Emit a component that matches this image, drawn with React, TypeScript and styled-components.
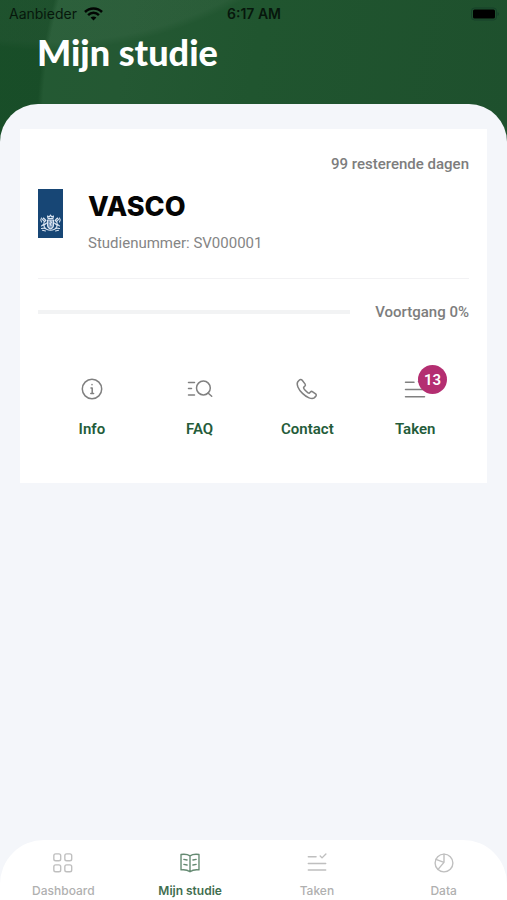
import React from 'react';
import styled, { createGlobalStyle } from 'styled-components';

const GlobalStyle = createGlobalStyle`
  * { box-sizing: border-box; }
  body { margin: 0; background: #f4f6fa; font-family: Roboto, "Liberation Sans", sans-serif; }
`;

const Page = styled.div`
  display: flex;
  flex-direction: column;
  min-height: 100vh;
`;

const Header = styled.header`
  height: 144px;
  overflow: hidden;
  background:
    radial-gradient(circle 500px at 537px 130px, transparent 99%, rgba(0, 50, 15, 0.3) 100%),
    radial-gradient(circle 400px at 50px -350px, rgba(255, 255, 255, 0.04) 98%, transparent 100%),
    linear-gradient(100deg, #235a33 0%, #245833 25%, #20552f 50%, #1e502d 100%);
`;

const StatusBar = styled.div`
  display: grid;
  grid-template-columns: 1fr auto 1fr;
  align-items: center;
  height: 27px;
  padding: 0 8px 0 9px;
  color: #07170c;
  font: 400 14px Inter, sans-serif;
`;

const Carrier = styled.span`
  display: flex;
  align-items: center;
  gap: 7px;
`;

const Clock = styled.span`
  font-weight: 600;
`;

const BatteryIcon = styled.svg`
  justify-self: end;
`;

const Title = styled.h1`
  margin: 0;
  padding-left: 37px;
  color: #fff;
  font: 900 36px/50px Lato, sans-serif;
`;

const Sheet = styled.main`
  flex: 1;
  margin-top: -40px;
  padding: 25px 20px;
  border-radius: 38px 38px 0 0;
  background: #f4f6fa;
`;

const Card = styled.section`
  padding: 25px 18px 44px;
  background: #fff;
`;

const Note = styled.p`
  margin: 0;
  color: #7d7d7d;
  font-size: 15px;
  line-height: 20px;
  font-weight: 500;
  text-align: right;
  white-space: nowrap;
`;

const Study = styled.div`
  display: flex;
  gap: 25px;
  padding: 15px 0 25px;
  border-bottom: 1px solid #f2f2f4;
`;

const StudyName = styled.h2`
  margin: 0 0 9px;
  color: #050505;
  font: 800 27px/35px Inter, sans-serif;
`;

const StudyNumber = styled.p`
  margin: 0;
  color: #858585;
  font-size: 15px;
  line-height: 20px;
`;

const ProgressRow = styled.div`
  display: flex;
  align-items: center;
  gap: 25px;
  padding-top: 23px;
`;

const Progress = styled.progress`
  flex: 1;
  min-width: 0;
  height: 4px;
  appearance: none;
  border: 0;
  background: #f2f3f4;
  &::-webkit-progress-bar { background: #f2f3f4; }
  &::-webkit-progress-value { background: #23582f; }
`;

const Actions = styled.div`
  display: grid;
  grid-template-columns: repeat(4, 1fr);
  margin-top: 55px;
`;

const Action = styled.button`
  display: flex;
  flex-direction: column;
  align-items: center;
  gap: 18px;
  padding: 0;
  border: 0;
  background: none;
  color: #245c3a;
  font: 600 15px/20px Roboto, sans-serif;
`;

const IconBox = styled.span`
  position: relative;
  display: flex;
  color: #808080;
`;

const Badge = styled.span`
  position: absolute;
  left: 15px;
  top: -12px;
  width: 29px;
  height: 29px;
  border-radius: 50%;
  background: #b42e71;
  color: #fff;
  font: 600 15px/30px Roboto, sans-serif;
  text-align: center;
`;

const TabBar = styled.nav`
  display: grid;
  grid-template-columns: repeat(4, 1fr);
  height: 60px;
  padding-top: 12px;
  border-radius: 44px 44px 0 0;
  background: #fff;
`;

const Tab = styled.a<{ $active?: boolean }>`
  display: flex;
  flex-direction: column;
  align-items: center;
  gap: 9px;
  color: ${({ $active }) => ($active ? '#3f6e50' : '#b0b0b0')};
  font: ${({ $active }) => ($active ? 600 : 500)} 12px/16px Inter, sans-serif;
  text-decoration: none;
  svg { opacity: 0.8; }
`;

const Line = styled.svg.attrs({ viewBox: '0 0 24 24', fill: 'none', stroke: 'currentColor', 'aria-hidden': true })`
  height: 24px;
  width: 24px;
  overflow: visible;
  stroke-width: 1.5;
  stroke-linecap: round;
  stroke-linejoin: round;
`;

const TabLine = styled(Line)`
  height: 22px;
  width: 22px;
`;

const Wifi = () => (
  <svg width="19" height="14" viewBox="0 0 19 14" fill="none" stroke="#020503" strokeWidth="2.5" aria-hidden="true">
    <path d="M1 5C5.7.3 13.3.3 18 5M4.1 8.1c3-3 7.8-3 10.8 0" />
    <path d="M9.5 13.5 6.6 10.6c1.7-1.5 4.1-1.5 5.8 0z" fill="#020503" stroke="none" />
  </svg>
);

const Battery = () => (
  <BatteryIcon width="28" height="14" viewBox="0 0 28 14" aria-hidden="true">
    <rect x=".5" y="1" width="25" height="12" rx="3" fill="none" stroke="#16412a" />
    <rect x="2" y="2.5" width="22" height="9" rx="1.5" fill="#000" />
    <path d="M26.5 5v4q1.5-.7 1.5-2t-1.5-2" fill="#16412a" />
  </BatteryIcon>
);

const Ribbon = () => (
  <svg width="25" height="49" viewBox="0 0 25 49" role="img" aria-label="Rijksoverheid">
    <path fill="#174675" d="M0 0h25v49H0z" />
    <g fill="none" stroke="#dce6f2" strokeWidth="1.1" strokeLinecap="round" strokeLinejoin="round">
      <path d="M9.5 31h6v5q0 3-3 4-3-1-3-4z" fill="#7895b7" />
      <path d="M10 29.5 9.5 27l1.7 1 1.3-2 1.3 2 1.7-1-.5 2.5zM12.5 26v1" />
      <path d="m7.5 31-2-2-1 1.7 1.8 1.5-.5 3L3.5 37M8.5 34 5.7 36.5 7 39M3.5 33q-1.5-2 0-4M6 33l2-1.5M17.5 31l2-2 1 1.7-1.8 1.5.5 3 2.3 1.8M16.5 34l2.8 2.5L18 39M21.5 33q1.5-2 0-4M19 33l-2-1.5" />
      <path d="M3.5 39.5q3.5-1 5 .8 4 1.8 8 0 1.5-1.8 5-.8M4.5 41.3l3 .7M20.5 41.3l-3 .7" />
      <path d="m12.5 32 1 1.5-1.5 1 1 2" />
    </g>
  </svg>
);

const InfoIcon = () => (
  <Line>
    <circle cx="12" cy="12" r="9.7" />
    <path d="M11 11h1.2v5.3M10.8 16.5h2.8M12 7.6v.2" />
  </Line>
);

const FaqIcon = () => (
  <Line>
    <path d="M.5 5.5h6M.5 11.5h3M.5 18h6M20 16l3.7 3.2" />
    <circle cx="15.4" cy="11" r="6.9" />
  </Line>
);

const PhoneIcon = () => (
  <Line>
    <path d="M4.2 3.2 2.8 4.8c-1.7 2.4.4 7.4 4.7 11.6s9.3 6.2 11.7 4.5l1.5-1.5c.8-.8.7-1.8-.1-2.5l-2.9-2.1c-.8-.6-1.7-.4-2.3.2l-1.1 1.2c-1 .5-6.1-4.6-5.7-5.8l1.2-1.2c.7-.6.8-1.5.2-2.3L7.2 3.3c-.8-1-2.1-1-3-.1z" />
  </Line>
);

const TasksPath = () => <path d="M2.5 5.2H11M2.5 12.5h19M2.5 19.7h19M15.5 4.4l2 2 4.2-4.2" />;

const actions = [
  { label: 'Info', icon: <InfoIcon /> },
  { label: 'FAQ', icon: <FaqIcon /> },
  { label: 'Contact', icon: <PhoneIcon /> },
  { label: 'Taken', icon: <Line><TasksPath /></Line>, badge: 13 },
];

const tabs = [
  {
    label: 'Dashboard',
    icon: (
      <TabLine>
        <rect x="2" y="2" width="7.5" height="7.5" rx="2" />
        <rect x="14" y="2" width="7.5" height="7.5" rx="2" />
        <rect x="2" y="14" width="7.5" height="7.5" rx="2" />
        <rect x="14" y="14" width="7.5" height="7.5" rx="2" />
      </TabLine>
    ),
  },
  {
    label: 'Mijn studie',
    active: true,
    icon: (
      <TabLine>
        <path d="M12 4.2C9.5 2.5 6 2.2 2.2 2.7v16.8c3.8-.5 7.3.2 9.8 2 2.5-1.8 6-2.5 9.8-2V2.7C18 2.2 14.5 2.5 12 4.2zM12 4.2v17.3M5.3 8l3.5.7M5.3 13.5l3.5.7M18.7 8l-3.5.7M18.7 13.5l-3.5.7" />
      </TabLine>
    ),
  },
  { label: 'Taken', icon: <TabLine><TasksPath /></TabLine> },
  {
    label: 'Data',
    icon: (
      <TabLine>
        <circle cx="12" cy="12" r="9.7" />
        <path d="M12 2.3v9L5.5 19M12 11.3 3.2 8" />
      </TabLine>
    ),
  },
];

export default function App() {
  return (
    <Page>
      <GlobalStyle />
      <Header>
        <StatusBar>
          <Carrier>Aanbieder <Wifi /></Carrier>
          <Clock>6:17 AM</Clock>
          <Battery />
        </StatusBar>
        <Title>Mijn studie</Title>
      </Header>
      <Sheet>
        <Card>
          <Note>99 resterende dagen</Note>
          <Study>
            <Ribbon />
            <div>
              <StudyName>VASCO</StudyName>
              <StudyNumber>Studienummer: SV000001</StudyNumber>
            </div>
          </Study>
          <ProgressRow>
            <Progress value={0} max={100} aria-labelledby="progress-label" />
            <Note id="progress-label">Voortgang 0%</Note>
          </ProgressRow>
          <Actions>
            {actions.map(({ label, icon, badge }) => (
              <Action key={label} type="button">
                <IconBox>
                  {icon}
                  {badge && <Badge>{badge}</Badge>}
                </IconBox>
                {label}
              </Action>
            ))}
          </Actions>
        </Card>
      </Sheet>
      <TabBar>
        {tabs.map(({ label, icon, active }) => (
          <Tab key={label} href="#" $active={active} aria-current={active ? 'page' : undefined}>
            {icon}
            {label}
          </Tab>
        ))}
      </TabBar>
    </Page>
  );
}
